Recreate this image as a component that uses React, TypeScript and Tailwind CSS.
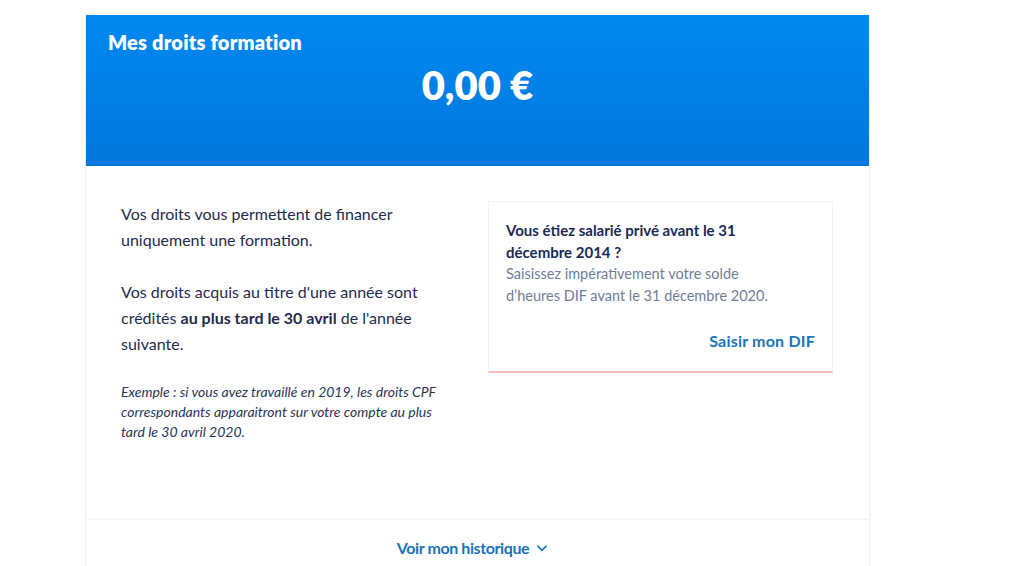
import React from 'react';

// Training rights summary card
export default function App() {
  return (
    <div className="min-h-[566px] bg-white pt-[15px] font-['Lato',sans-serif] text-[#1f2b4d]">
      <div className="ml-[85px] w-[785px] border-x border-[#eceff2]">
        <div className="h-[151px] bg-gradient-to-b from-[#0089f2] to-[#0077dc] px-[22px] pt-[15px] text-white">
          <h2 className="text-[20px] font-extrabold leading-[24px] tracking-[0.2px]">Mes droits formation</h2>
          <div className="mt-[7px] text-center text-[40px] font-extrabold leading-[48px]">0,00 €</div>
        </div>

        <div className="flex items-start justify-between pl-[35px] pr-[36px] pt-[35px]">
          <div className="w-[345px]">
            <p className="text-[16px] leading-[26px]">
              Vos droits vous permettent de financer uniquement une formation.
            </p>
            <p className="mt-[26px] text-[16px] leading-[26px]">
              Vos droits acquis au titre d'une année sont crédités <b>au plus tard le 30 avril</b> de l'année suivante.
            </p>
            <p className="mt-[25px] w-[322px] text-[14px] italic leading-[20px] text-[#2a3556]">
              Exemple : si vous avez travaillé en 2019, les droits CPF correspondants apparaitront sur votre compte au plus tard le 30 avril 2020.
            </p>
          </div>

          <div className="w-[345px] border border-b-2 border-[#f0f2f4] border-b-[#f4b9bb] px-[17px] pt-[17px] pb-[19px]">
            <div className="w-[290px]">
              <p className="text-[15px] font-bold leading-[22px] text-[#1a2a55]">
                Vous étiez salarié privé avant le 31 décembre 2014 ?
              </p>
              <p className="text-[14.5px] leading-[22px] text-[#6f7d99]">
                Saisissez impérativement votre solde d’heures DIF avant le 31 décembre 2020.
              </p>
            </div>
            <div className="mt-[23px] text-right text-[16px] font-bold leading-[22px] tracking-[0.2px] text-[#1a73ba]">
              Saisir mon DIF
            </div>
          </div>
        </div>

        <div className="mt-[77px] border-t border-[#f0f2f4] pt-[16px] pb-[10px]">
          <div className="flex items-center justify-center gap-[6px] pr-[9px] text-[16px] font-bold tracking-[-0.4px] text-[#1a73ba]">
            <span>Voir mon historique</span>
            <svg width="14" height="14" viewBox="0 0 24 24" fill="none" stroke="currentColor" strokeWidth="3" strokeLinecap="round" strokeLinejoin="round">
              <path d="M5 9l7 7 7-7" />
            </svg>
          </div>
        </div>
      </div>
    </div>
  );
}
